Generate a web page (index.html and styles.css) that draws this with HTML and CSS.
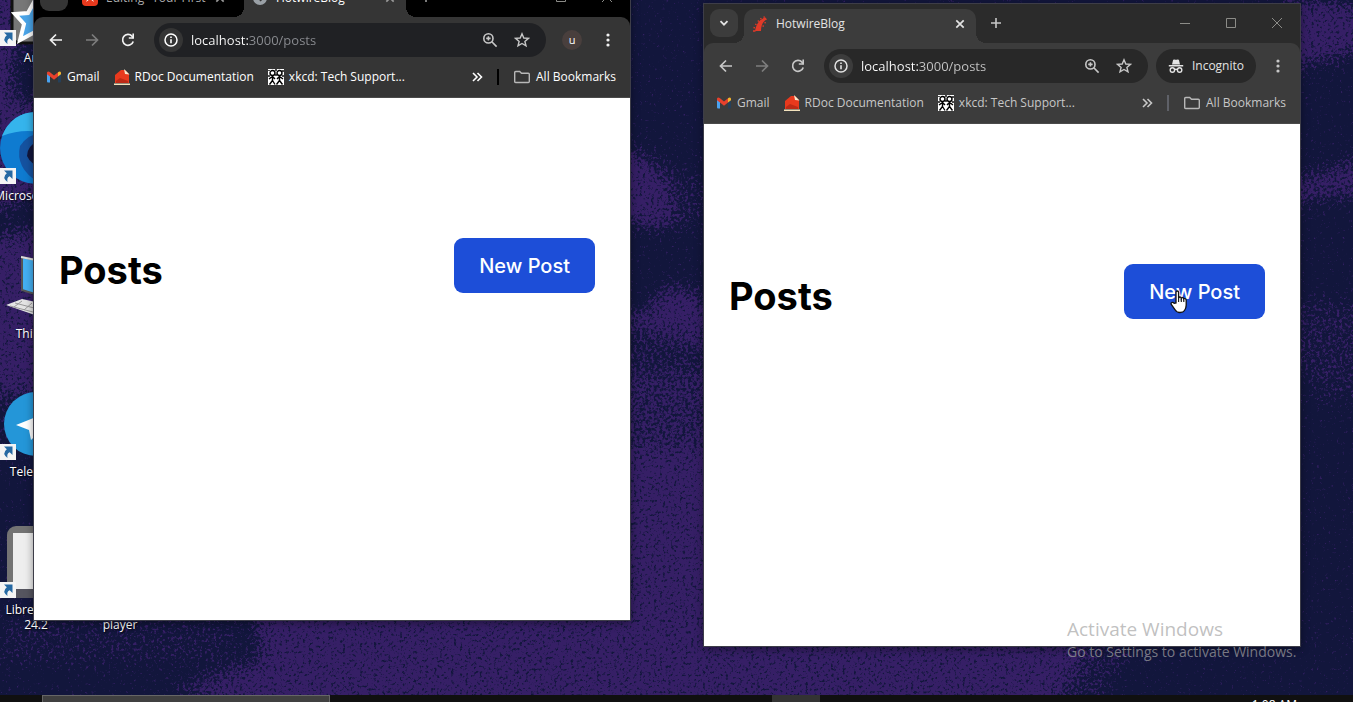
FILE: index.html
```html
<!DOCTYPE html>
<html lang="en">
<head>
  <meta charset="utf-8">
  <title>HotwireBlog</title>
  <link rel="stylesheet" href="styles.css">
</head>
<body>
  <!-- shared icons -->
  <svg class="sprite" aria-hidden="true">
    <symbol id="i-back" viewBox="0 0 16 16"><path d="M14 8H3M8 2.5 2.5 8 8 13.5" fill="none" stroke="currentColor" stroke-width="1.7"/></symbol>
    <symbol id="i-forward" viewBox="0 0 16 16"><path d="M2 8h11M8 2.5 13.5 8 8 13.5" fill="none" stroke="currentColor" stroke-width="1.7"/></symbol>
    <symbol id="i-reload" viewBox="0 0 16 16"><path d="M13.2 9.4A5.4 5.4 0 1 1 12 4.2L13.4 6" fill="none" stroke="currentColor" stroke-width="1.7"/><path d="M14 1.6v5.2H8.8V5.2h3.6V1.6z" fill="currentColor"/></symbol>
    <symbol id="i-info" viewBox="0 0 16 16"><circle cx="8" cy="8" r="6" fill="none" stroke="currentColor" stroke-width="1.5"/><path d="M8 7.2v4M8 4.5v1.6" stroke="currentColor" stroke-width="1.6"/></symbol>
    <symbol id="i-zoom" viewBox="0 0 16 16"><circle cx="6.4" cy="6.4" r="4.6" fill="none" stroke="currentColor" stroke-width="1.6"/><path d="M9.8 9.8l4.8 4.8M6.4 4.2v4.4M4.2 6.4h4.4" stroke="currentColor" stroke-width="1.6"/></symbol>
    <symbol id="i-star" viewBox="0 0 16 16"><path d="M8 1.8l1.8 4.2 4.6.4-3.5 3 1.1 4.5L8 11.5l-4 2.4 1.1-4.5-3.500-3L6.200 6z" fill="none" stroke="currentColor" stroke-width="1.4"/></symbol>
    <symbol id="i-menu" viewBox="0 0 16 16"><g fill="currentColor"><circle cx="8" cy="3" r="1.6"/><circle cx="8" cy="8" r="1.6"/><circle cx="8" cy="13" r="1.6"/></g></symbol>
    <symbol id="i-more" viewBox="0 0 12 12"><path d="M2 2l4 4-4 4M6.500 2l4 4-4 4" fill="none" stroke="currentColor" stroke-width="1.6"/></symbol>
    <symbol id="i-folder" viewBox="0 0 18 16"><path d="M1.700 3.500q0-1 1-1h4l1.800 1.800h6.800q1 0 1 1v7.200q0 1-1 1H2.700q-1 0-1-1z" fill="none" stroke="currentColor" stroke-width="1.400"/></symbol>
    <symbol id="i-down" viewBox="0 0 16 16"><path d="M4.500 6.200 8 9.700l3.500-3.500" fill="none" stroke="currentColor" stroke-width="1.800"/></symbol>
    <symbol id="i-close" viewBox="0 0 16 16"><path d="M4.300 4.300l7.400 7.400M11.700 4.300l-7.400 7.400" stroke="currentColor" stroke-width="1.700"/></symbol>
    <symbol id="i-plus" viewBox="0 0 16 16"><path d="M8 3v10M3 8h10" stroke="currentColor" stroke-width="1.600"/></symbol>
    <symbol id="i-min" viewBox="0 0 12 12"><path d="M1 6.500h10" stroke="currentColor"/></symbol>
    <symbol id="i-max" viewBox="0 0 12 12"><path d="M1.500 1.500h9v9h-9z" fill="none" stroke="currentColor"/></symbol>
    <symbol id="i-x" viewBox="0 0 12 12"><path d="M1 1l10 10M11 1 1 11" stroke="currentColor"/></symbol>
    <symbol id="i-incognito" viewBox="0 0 16 16"><path d="M4 6.500 5 2.200q.3-1 1.400-.7 1.600.5 3.200 0Q10.700 1.200 11 2.200l1 4.300zM.800 7.100h14.400v1.500H.800z" fill="currentColor"/><g fill="none" stroke="currentColor" stroke-width="1.400"><circle cx="4.400" cy="12" r="2.200"/><circle cx="11.600" cy="12" r="2.200"/><path d="M6.400 11.600q1.600-.8 3.200 0"/></g></symbol>
    <symbol id="i-rails" viewBox="0 0 16 16"><path d="M3 15C4 9 7 3 13.500 1.500L15 3.500C11 5 9 9 9 15z" fill="#e03a28"/><path d="M1 15h2.500M1.500 11.500l1.500.3M3.200 8l1.300.8M5.800 4.500l1 1.200M8.500 2l.8 1.200M12 .3l.3 1.500M12.500 6.500l1.300.3M10.500 10l1.500.2" stroke="#e03a28" stroke-width="1.300"/></symbol>
    <symbol id="i-gmail" viewBox="0 0 16 16"><path d="M1 4.500 4 7v6.500H2q-1 0-1-1z" fill="#4aa3f0"/><path d="M12 7l3-2.500v8q0 1-1 1h-2z" fill="#25405a"/><path d="M1 3.500Q2 1.800 4 3.300l4 3.200 4-3.200V7.500l-4 3.200-4-3.200-3-2.300z" fill="#e8412c"/><path d="M12 3.300q2-1.600 3 .2v1.800l-3 2.300z" fill="#f5b52e"/></symbol>
    <symbol id="i-rdoc" viewBox="0 0 16 16"><path d="M1 6 7 1h4l4 4v9H1z" fill="#e8391d"/><path d="M0 14.500h16V16H0z" fill="#f3e3bd"/><path d="M2 12l4-3 8 3v2H2z" fill="#bd2a16"/><path d="M10 0l5.500 5.500-4.500-.5z" fill="#f6ead0"/></symbol>
    <symbol id="i-xkcd" viewBox="0 0 16 16"><path fill="#fff" d="M0 0h16v16H0z"/><g fill="none" stroke="#000" stroke-width="1.400"><circle cx="4.500" cy="4" r="2.500"/><circle cx="11.500" cy="4" r="2.500"/><path d="M4.500 6.500v5l-3 4M4.500 11.500l2.500 4M1 10l3.500-2.500L7 10M9 10l2.500-2.500L15 10M11.500 6.500v5l-3 4M11.500 11.500l3 4M1 1v1M8 0v2M15 1v2M1 6v2M15 6v2M8 5v2"/></g></symbol>
    <symbol id="i-shortcut" viewBox="0 0 16 16"><path d="M0 0h16v16H0z" fill="#f4f4f4"/><path d="M4 2.500h8.500V11l-2.800-2.800Q6.500 9.500 7.500 14 1.500 9.500 6.800 5.300z" fill="#2669a3"/></symbol>
  </svg>

  <div class="screen">
    <main class="desktop">
      <svg class="wallpaper" viewBox="0 0 1353 695" preserveAspectRatio="none" aria-hidden="true">
        <defs>
          <filter id="grain" filterUnits="userSpaceOnUse" x="0" y="0" width="1353" height="695" color-interpolation-filters="sRGB">
            <feGaussianBlur in="SourceGraphic" stdDeviation="9" result="shape"/>
            <feTurbulence type="fractalNoise" baseFrequency="0.35" numOctaves="3" seed="4"/>
            <feColorMatrix values="0 0 0 0 0  0 0 0 0 0  0 0 0 0 0  1 0 0 0 0" result="noise"/>
            <feComposite in="shape" in2="noise" operator="arithmetic" k2="1" k3="2.400" k4="-1.600" result="mix"/>
            <feColorMatrix in="mix" values="0 0 0 0 0.210  0 0 0 0 0.122  0 0 0 0 0.400  0 0 0 2 0"/>
          </filter>
        </defs>
        <path fill="#12163c" d="M0 0h1353v695H0z"/>
        <g filter="url(#grain)" fill="#fff">
          <path d="M-30-30h60v60L14 60l0 40 40 0v100H20L0 215-30 200zM-30 240L50 225v170H-30z"/>
          <path fill-opacity=".35" d="M-30 400h80v40H-30zM0 615h240v50H0z"/>
          <path d="M250 600h370V450h100v185h290l80 10-50 80H300L170 690l90-30z"/>
          <path fill-opacity=".7" d="M600 375h120v90H600z"/>
          <path fill-opacity=".45" d="M600 335h120v50H600zM1080 640l60 0-50 80h-60z"/>
          <path d="M600 145l45 8 25 30 5 40-25 8-50-20z"/>
          <path fill-opacity=".4" d="M650 160l60 15v50l-50 10z"/>
          <path d="M620 318l30-12 10-20h30l20 15v45l-90-20z"/>
          <path d="M1280 0h60l30 15v35l-90 22z"/>
          <path fill-opacity=".9" d="M1270 180l50-8 50-20v45l-50 2-50 15z"/>
          <path fill-opacity=".45" d="M1270 300h100v90l-30 5-15 15-15-30-40-20z"/>
        </g>
      </svg>

      <ul class="icons">
        <li>
          <div class="app">
            <svg viewBox="0 0 72 72"><rect x="12" y="1" width="54" height="68" rx="8" fill="#777"/><rect x="12" y="1" width="54" height="68" rx="8" fill="none" stroke="#111" stroke-width="3"/><path d="M34 28l6 13 14 1-11 9 5 15-13-8-15 8 4-16-9-10 13-1z" fill="#4aa4e8" stroke="#fff" stroke-width="4"/></svg>
            <svg class="shortcut"><use href="#i-shortcut"/></svg>
          </div>
          <span>Anki</span>
        </li>
        <li>
          <div class="app">
            <svg viewBox="0 0 72 72"><circle cx="36" cy="36" r="36" fill="#0f7bd0"/><path d="M2 24Q12 0 36 0q36 0 36 36Q40 10 2 24z" fill="#35b4ec"/><path d="M72 36Q38 8 20 34q-5 22 18 36 34-2 34-34z" fill="#1552a0"/><path d="M72 60Q34 60 27 44q0-20 45-20z" fill="#12163c"/></svg>
            <svg class="shortcut"><use href="#i-shortcut"/></svg>
          </div>
          <span>Microsoft Edge</span>
        </li>
        <li>
          <div class="app">
            <svg viewBox="0 0 72 72"><path d="M22 7l48 10v38L22 40z" fill="#44b0f2" stroke="#555" stroke-width="2"/><path d="M21 7l49 10" stroke="#ddd" stroke-width="2"/><path d="M6 55l16-6 46 10-16 12z" fill="#e4e4e4"/><path d="M10 56l42 11M15 53l42 11M22 51l-8 6M32 53l-8 7M42 56l-8 7" stroke="#999"/></svg>
          </div>
          <span>This PC</span>
        </li>
        <li>
          <div class="app">
            <svg viewBox="0 0 72 72"><circle cx="36" cy="36" r="32" fill="#2496d8"/><path d="M16 37l40-16-7 36-13-10-5 5-2-10z" fill="#fff"/></svg>
            <svg class="shortcut"><use href="#i-shortcut"/></svg>
          </div>
          <span>Telegram</span>
        </li>
        <li>
          <div class="app">
            <svg viewBox="0 0 72 72"><rect x="7" width="58" height="72" rx="9" fill="#737373"/><path d="M7 63h58q0 9-9 9H16q-9 0-9-9z" fill="#55555f"/><path d="M13 7h46v56H13z" fill="#eee"/></svg>
            <svg class="shortcut"><use href="#i-shortcut"/></svg>
          </div>
          <span>LibreOffice 24.2</span>
        </li>
        <li>
          <div class="app">
            <svg viewBox="0 0 72 72"><path d="M36 4l20 60H16z" fill="#f48b00"/></svg>
          </div>
          <span>VLC media player</span>
        </li>
      </ul>

      <!-- normal window -->
      <section class="window window-main">
        <header class="tabs">
          <button class="tab-search" aria-label="Search tabs"><svg><use href="#i-down"/></svg></button>
          <div class="tab">
            <svg class="favicon" viewBox="0 0 16 16"><rect width="16" height="16" rx="4" fill="#e8391d"/><path d="M4 12 8 4l4 8-4-3z" fill="#fff"/></svg>
            <span class="tab-title">Editing "Your First</span>
            <button class="tab-close" aria-label="Close tab"><svg><use href="#i-close"/></svg></button>
          </div>
          <div class="tab active">
            <svg class="favicon" viewBox="0 0 16 16"><circle cx="8" cy="8" r="7" fill="#9aa0a6"/><path d="M3 6l4 1 2 4M9 2l2 4 3 1" stroke="#353535" stroke-width="2" fill="none"/></svg>
            <span class="tab-title">HotwireBlog</span>
            <button class="tab-close" aria-label="Close tab"><svg><use href="#i-close"/></svg></button>
          </div>
          <button class="new-tab" aria-label="New tab"><svg><use href="#i-plus"/></svg></button>
          <div class="controls">
            <button aria-label="Minimize"><svg><use href="#i-min"/></svg></button>
            <button aria-label="Maximize"><svg><use href="#i-max"/></svg></button>
            <button aria-label="Close"><svg><use href="#i-x"/></svg></button>
          </div>
        </header>
        <div class="chrome">
          <div class="toolbar">
            <button class="tool" aria-label="Back"><svg><use href="#i-back"/></svg></button>
            <button class="tool" aria-label="Forward" disabled><svg><use href="#i-forward"/></svg></button>
            <button class="tool" aria-label="Reload"><svg><use href="#i-reload"/></svg></button>
            <div class="omnibox">
              <button class="site-info" aria-label="Site information"><svg><use href="#i-info"/></svg></button>
              <input type="text" value="localhost:3000/posts" aria-label="Address">
              <button class="omni-btn" aria-label="Zoom"><svg><use href="#i-zoom"/></svg></button>
              <button class="omni-btn" aria-label="Bookmark this tab"><svg><use href="#i-star"/></svg></button>
            </div>
            <button class="tool" aria-label="Profile"><span class="avatar">u</span></button>
            <button class="tool" aria-label="Menu"><svg><use href="#i-menu"/></svg></button>
          </div>
          <nav class="bookmarks">
            <a href="#"><svg><use href="#i-gmail"/></svg>Gmail</a>
            <a href="#"><svg><use href="#i-rdoc"/></svg>RDoc Documentation</a>
            <a href="#"><svg><use href="#i-xkcd"/></svg>xkcd: Tech Support...</a>
            <button class="more" aria-label="More bookmarks"><svg><use href="#i-more"/></svg></button>
            <span class="divider"></span>
            <a href="#"><svg><use href="#i-folder"/></svg>All Bookmarks</a>
          </nav>
        </div>
        <div class="page">
          <h1>Posts</h1>
          <a class="new-post" href="#">New Post</a>
        </div>
      </section>

      <!-- incognito window -->
      <section class="window window-incognito">
        <header class="tabs">
          <button class="tab-search" aria-label="Search tabs"><svg><use href="#i-down"/></svg></button>
          <div class="tab active">
            <svg class="favicon"><use href="#i-rails"/></svg>
            <span class="tab-title">HotwireBlog</span>
            <button class="tab-close" aria-label="Close tab"><svg><use href="#i-close"/></svg></button>
          </div>
          <button class="new-tab" aria-label="New tab"><svg><use href="#i-plus"/></svg></button>
          <div class="controls">
            <button aria-label="Minimize"><svg><use href="#i-min"/></svg></button>
            <button aria-label="Maximize"><svg><use href="#i-max"/></svg></button>
            <button aria-label="Close"><svg><use href="#i-x"/></svg></button>
          </div>
        </header>
        <div class="chrome">
          <div class="toolbar">
            <button class="tool" aria-label="Back"><svg><use href="#i-back"/></svg></button>
            <button class="tool" aria-label="Forward" disabled><svg><use href="#i-forward"/></svg></button>
            <button class="tool" aria-label="Reload"><svg><use href="#i-reload"/></svg></button>
            <div class="omnibox">
              <button class="site-info" aria-label="Site information"><svg><use href="#i-info"/></svg></button>
              <input type="text" value="localhost:3000/posts" aria-label="Address">
              <button class="omni-btn" aria-label="Zoom"><svg><use href="#i-zoom"/></svg></button>
              <button class="omni-btn" aria-label="Bookmark this tab"><svg><use href="#i-star"/></svg></button>
            </div>
            <button class="incognito"><svg><use href="#i-incognito"/></svg>Incognito</button>
            <button class="tool" aria-label="Menu"><svg><use href="#i-menu"/></svg></button>
          </div>
          <nav class="bookmarks">
            <a href="#"><svg><use href="#i-gmail"/></svg>Gmail</a>
            <a href="#"><svg><use href="#i-rdoc"/></svg>RDoc Documentation</a>
            <a href="#"><svg><use href="#i-xkcd"/></svg>xkcd: Tech Support...</a>
            <button class="more" aria-label="More bookmarks"><svg><use href="#i-more"/></svg></button>
            <span class="divider"></span>
            <a href="#"><svg><use href="#i-folder"/></svg>All Bookmarks</a>
          </nav>
        </div>
        <div class="page">
          <h1>Posts</h1>
          <a class="new-post" href="#">New Post</a>
        </div>
      </section>

      <div class="watermark">
        <p class="watermark-title">Activate Windows</p>
        <p>Go to Settings to activate Windows.</p>
      </div>

      <svg class="cursor" viewBox="0 0 18 24" aria-hidden="true"><path d="M6 13V2.500q0-1.500 1.300-1.500t1.300 1.500V8q.3-1 1.400-1 1.200 0 1.300 1.300Q11.700 7.500 12.600 7.600q1.100.1 1.200 1.400.4-.6 1.300-.4 1.100.3 1.100 1.600V15q0 3-1.700 5.500-1.200 2-4.500 2-3.300 0-4.700-2.500L1.300 14.500q-.7-1.500.6-2 1.300-.4 2.300.9z" fill="#fff" stroke="#111" stroke-width="1.300"/><path d="M8.600 8v4M11.300 8.500V12M13.800 9.500V12" stroke="#111" stroke-width="1.100"/></svg>
    </main>

    <footer class="taskbar">
      <button class="task-search" aria-label="Search"></button>
      <button class="task-app" aria-label="Google Chrome"></button>
      <time class="clock">1:08 AM</time>
    </footer>
  </div>
</body>
</html>
```

FILE: styles.css
```css
* {
  box-sizing: border-box;
}

body {
  margin: 0;
  font-family: "Open Sans", "Noto Sans", sans-serif;
  font-size: 12px;
  line-height: 16px;
  color: #fff;
}

button,
input {
  font: inherit;
  color: inherit;
  background: none;
  border: none;
  padding: 0;
  margin: 0;
}

button {
  display: flex;
  align-items: center;
  justify-content: center;
  flex: none;
}

a {
  color: inherit;
  text-decoration: none;
}

svg {
  width: 16px;
  height: 16px;
  flex: none;
}

.sprite {
  display: none;
}

.screen {
  display: flex;
  flex-direction: column;
  height: 100vh;
  overflow: hidden;
}

.desktop {
  position: relative;
  flex: 1;
  min-height: 0;
  overflow: hidden;
  background: #12163c;
}

.wallpaper {
  position: absolute;
  inset: 0;
  width: 100%;
  height: 100%;
}

/* desktop icons */
.icons {
  position: absolute;
  top: -26px;
  left: -6px;
  display: grid;
  grid-template-rows: repeat(5, 138px);
  grid-auto-columns: 84px;
  grid-auto-flow: column;
  margin: 0;
  padding: 0;
  list-style: none;
  text-align: center;
  line-height: 15px;
  text-shadow: 1px 1px 2px #000;
}

.icons li {
  display: flex;
  flex-direction: column;
  align-items: center;
  gap: 4px;
}

.icons li:last-child {
  grid-row: 5;
}

.icons span {
  width: 76px;
}

.icons li:nth-child(2) span {
  width: auto;
  white-space: nowrap;
}

.app {
  position: relative;
  width: 72px;
  height: 72px;
}

.app svg {
  display: block;
  width: 72px;
  height: 72px;
}

.app .shortcut {
  position: absolute;
  left: 0;
  bottom: 0;
  width: 16px;
  height: 16px;
}

/* browser windows */
.window {
  --strip: #2b2b2b;
  --bar: #3c3c3c;
  --field: #282828;
  --icon: #c7c7c7;
  --url: #c7c7c7;
  --divider: #5f6168;
  position: absolute;
  width: 598px;
  height: 644px;
  display: flex;
  flex-direction: column;
  border: 1px solid #3d3d48;
  background: #fff;
  box-shadow: 0 2px 8px rgba(0, 0, 0, 0.4);
  color: #e3e3e3;
}

.window-main {
  --strip: #000;
  --bar: #353535;
  --field: #202124;
  --icon: #f1f1f1;
  --url: #8b8d92;
  --divider: #000;
  top: -23px;
  left: 33px;
  color: #fff;
}

.window-incognito {
  top: 3px;
  left: 703px;
}

.tabs {
  display: flex;
  height: 39px;
  flex: none;
  padding: 5px 0 0 6px;
  background: var(--strip);
}

.tab-search {
  width: 28px;
  height: 28px;
  border-radius: 9px;
  background: var(--bar);
  margin-right: 6px;
}

.tab {
  position: relative;
  display: flex;
  align-items: center;
  width: 162px;
  height: 34px;
  padding: 0 8px 5px;
  margin-right: 8px;
  color: #aaa;
}

.tab.active {
  background: var(--bar);
  border-radius: 10px 10px 0 0;
  color: inherit;
}

.window-incognito .tab {
  width: 232px;
}

.tab.active::before,
.tab.active::after {
  content: "";
  position: absolute;
  bottom: 0;
  width: 10px;
  height: 10px;
}

.tab.active::before {
  left: -10px;
  background: radial-gradient(circle at 0 0, transparent 10px, var(--bar) 10px);
}

.tab.active::after {
  right: -10px;
  background: radial-gradient(circle at 100% 0, transparent 10px, var(--bar) 10px);
}

.tab-title {
  flex: 1;
  padding-left: 8px;
  white-space: nowrap;
  overflow: hidden;
}

.tab-close {
  width: 16px;
  height: 16px;
}

.window-main .tab-close,
.window-main .new-tab {
  color: #999;
}

.new-tab {
  width: 24px;
  height: 28px;
  color: var(--icon);
}

.controls {
  display: flex;
  margin-left: auto;
  height: 28px;
  color: #8c8c88;
}

.controls button {
  width: 46px;
}

.controls svg {
  width: 12px;
  height: 12px;
}

.chrome {
  flex: none;
  background: linear-gradient(var(--strip) 12px, var(--bar) 12px);
}

.toolbar {
  display: flex;
  align-items: center;
  height: 46px;
  padding: 0 4px;
  border-radius: 9px 9px 0 0;
  background: var(--bar);
}

.tool {
  width: 36px;
  height: 34px;
  color: var(--icon);
}

.tool:disabled {
  color: #7d7d7d;
}

.omnibox {
  flex: 1;
  display: flex;
  align-items: center;
  height: 34px;
  margin: 0 8px;
  padding: 0 8px 0 5px;
  border-radius: 17px;
  background: var(--field);
}

.site-info {
  width: 24px;
  height: 24px;
  border-radius: 12px;
  background: var(--bar);
}

.omnibox input {
  flex: 1;
  min-width: 0;
  padding-left: 8px;
  font-size: 13px;
  outline: none;
  /* host is brighter than the rest of the address */
  color: transparent;
  background: linear-gradient(to right, #fff 66px, var(--url) 66px);
  -webkit-background-clip: text;
  background-clip: text;
}

.omni-btn {
  width: 32px;
  height: 32px;
  color: #c7c7c7;
}

.avatar {
  width: 20px;
  height: 20px;
  border-radius: 10px;
  background: #493f3d;
  color: #fff;
  font-size: 11px;
  line-height: 19px;
}

.incognito {
  height: 34px;
  padding: 0 12px;
  margin-right: 4px;
  gap: 8px;
  border-radius: 17px;
  background: var(--field);
}

.bookmarks {
  display: flex;
  align-items: center;
  height: 35px;
  padding: 0 14px 6px 12px;
  gap: 14px;
  border-bottom: 1px solid #4a4a4a;
}

.window-incognito .bookmarks {
  color: #c7c7c7;
}

.bookmarks a {
  display: flex;
  align-items: center;
  gap: 5px;
  white-space: nowrap;
}

.more {
  margin-left: auto;
}

.more svg {
  width: 12px;
  height: 12px;
}

.divider {
  width: 2px;
  height: 16px;
  background: var(--divider);
}

.bookmarks a:last-child svg {
  width: 18px;
  color: #b8b8b8;
}

/* blog page */
.page {
  display: flex;
  align-items: flex-start;
  justify-content: space-between;
  padding: 140px 35px 0 25px;
  font-family: Inter, sans-serif;
}

.page h1 {
  margin: 0;
  font-size: 38px;
  line-height: 64px;
  font-weight: 700;
  color: #000;
}

.new-post {
  padding: 16px 25px 14px;
  border-radius: 9px;
  background: #1d4ed8;
  color: #fff;
  font-size: 20px;
  line-height: 25px;
  font-weight: 500;
}

.watermark {
  position: absolute;
  right: 50px;
  bottom: 33px;
  width: 236px;
  color: rgba(165, 165, 165, 0.7);
  font-size: 14px;
  line-height: 20px;
}

.watermark p {
  margin: 0;
}

.watermark .watermark-title {
  font-size: 19px;
  line-height: 26px;
}

.cursor {
  position: absolute;
  top: 290px;
  left: 1170px;
  width: 18px;
  height: 24px;
}

/* taskbar, mostly below the fold */
.taskbar {
  display: flex;
  height: 7px;
  flex: none;
  overflow: hidden;
  padding: 0 56px 0 42px;
  background: #101010;
}

.task-search {
  width: 288px;
  height: 40px;
  background: #404040;
  border: 1px solid #666;
}

.task-app {
  width: 48px;
  height: 40px;
  margin-left: 442px;
  background: #333;
}

.clock {
  margin-left: auto;
  padding-top: 2px;
}
```
